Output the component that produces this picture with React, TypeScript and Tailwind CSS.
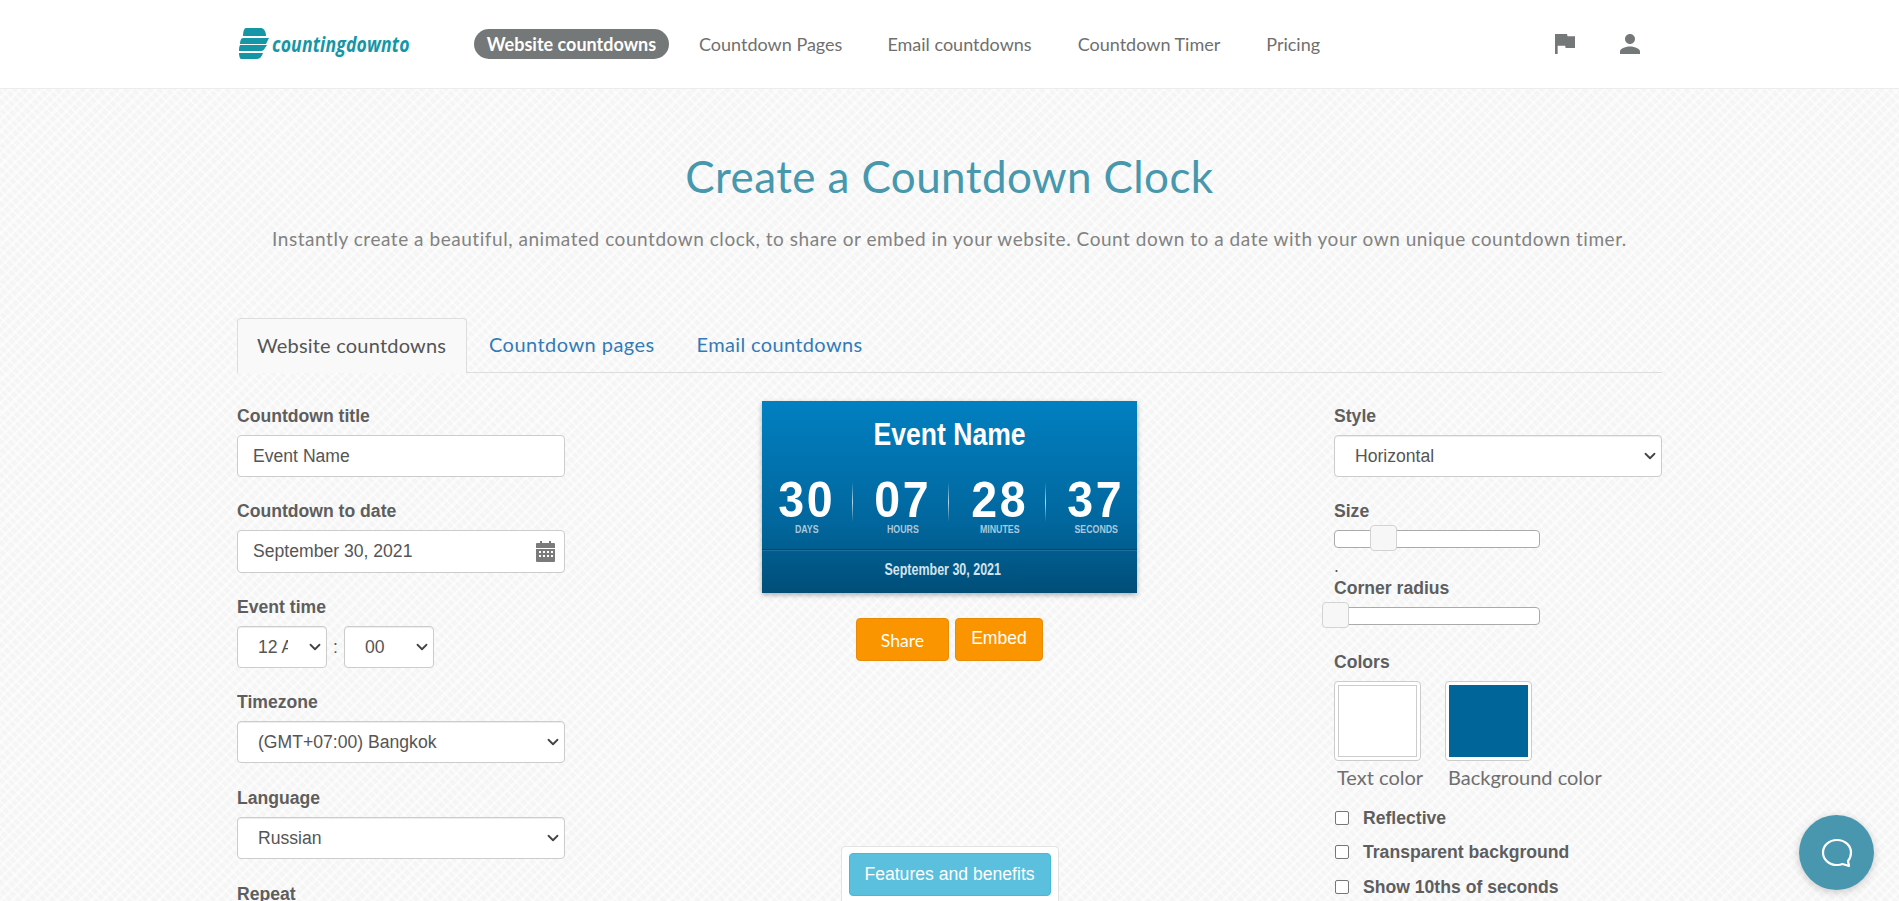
import { ChevronDown } from 'lucide-react'

const navItems = ['Countdown Pages', 'Email countdowns', 'Countdown Timer', 'Pricing']

function Label({ children }: { children: string }) {
  return <div className="text-[17.6px] leading-[20px] font-bold text-[#5e5e5e] mb-[9px]">{children}</div>
}

function SelectBox({ value, className, clip }: { value: string; className: string; clip?: boolean }) {
  return (
    <div className={`h-[42px] bg-white border border-[#ccc] rounded-[4px] flex items-center justify-between shadow-[inset_0_1px_1px_rgba(0,0,0,0.075)] ${className}`}>
      <span className={`text-[17.6px] text-[#555] ml-[20px] whitespace-nowrap ${clip ? 'w-[30px] overflow-hidden' : ''}`}>{value}</span>
      <ChevronDown size={18} strokeWidth={2.4} className="text-[#444] mr-[2px] shrink-0" />
    </div>
  )
}

function Slider({ thumb }: { thumb: string }) {
  return (
    <div className="relative w-[206px] h-[18px] bg-white border border-[#aaa] rounded-[4px]">
      <div className={`absolute top-[-6px] w-[27px] h-[26px] bg-[#f7f7f7] border border-[#d3d3d3] rounded-[4px] ${thumb}`} />
    </div>
  )
}

function Check({ label, className }: { label: string; className: string }) {
  return (
    <div className={`flex items-center h-[20px] ${className}`}>
      <div className="w-[14px] h-[14px] bg-white border border-[#767676] rounded-[2px] mr-[14px] ml-[1px]" />
      <span className="text-[17.6px] font-bold text-[#5e5e5e]">{label}</span>
    </div>
  )
}

function Unit({ num, unit }: { num: string; unit: string }) {
  return (
    <div className="w-[95.5px] flex flex-col items-center">
      <div className="text-[50px] leading-[44px] font-bold text-white tracking-[3px] scale-x-[0.93]">{num}</div>
      <div className="text-[11px] leading-[12px] mt-[1px] font-bold text-[#a9c8dc] scale-x-[0.8]">{unit}</div>
    </div>
  )
}

function Divider() {
  return <div className="w-px h-[40px] mt-[4px] -translate-x-[3px] bg-linear-to-b from-transparent via-[#b5d6ea] to-transparent" />
}

export default function App() {
  return (
    <div className="h-screen overflow-hidden font-['Liberation_Sans',Arial,sans-serif] relative bg-[#f5f5f5] bg-[repeating-linear-gradient(45deg,#ffffff00_0,#ffffff00_4px,#ffffff80_4px,#ffffff80_6px),repeating-linear-gradient(-45deg,#ffffff00_0,#ffffff00_5px,#ffffff80_5px,#ffffff80_8px)]">
      <header className="h-[89px] bg-white border-b border-[#ececec] pl-[238px] pr-[259px] flex items-center">
        <div className="flex items-center w-[236px] -mt-[2px]">
          <svg width="30" height="31" viewBox="0 0 30 31" fill="#1496a6" className="ml-px shrink-0">
            <path d="M7 0h15c3 0 5 4 5 8H4c0-4 1-8 3-8z" />
            <path d="M4 10h26l-3 6H1c0-3 1-6 3-6z" />
            <path d="M1 17h27l-2 3c-1 2-2 3-4 3H0c0-2 0-4 1-6z" />
            <path d="M0 25h24c-1 3-3 6-6 6H2c-1 0-2-3-2-6z" />
          </svg>
          <span className="font-['Open_Sans',sans-serif] italic font-bold text-[22px] leading-[30px] tracking-[0.2px] text-[#1496a6] ml-[3px] scale-x-[0.8] origin-left whitespace-nowrap">countingdownto</span>
        </div>
        <nav className="flex items-center font-['Lato',sans-serif] text-[18px] text-[#6f6f6f]">
          <span className="w-[195px] h-[30px] leading-[30px] text-center rounded-full bg-[#757878] text-white font-bold mr-[30px] -mt-[1px] whitespace-nowrap">Website countdowns</span>
          <span className="mr-[45px] whitespace-nowrap">{navItems[0]}</span>
          <span className="mr-[46px] whitespace-nowrap">{navItems[1]}</span>
          <span className="mr-[46px] whitespace-nowrap">{navItems[2]}</span>
          <span className="whitespace-nowrap">{navItems[3]}</span>
        </nav>
        <div className="ml-auto flex items-center gap-[45px] text-[#757878] -mt-[1px]">
          <svg width="20" height="20" viewBox="5 4 15 17" preserveAspectRatio="none" fill="currentColor"><path d="M14.4 6L14 4H5v17h2v-7h5.600l.4 2h7V6z" /></svg>
          <svg width="20" height="20" viewBox="4 4 16 16" fill="currentColor"><path d="M12 12c2.210 0 4-1.790 4-4s-1.790-4-4-4-4 1.790-4 4 1.790 4 4 4zm0 2c-2.670 0-8 1.340-8 4v2h16v-2c0-2.660-5.330-4-8-4z" /></svg>
        </div>
      </header>

      <h1 className="font-['Lato',sans-serif] text-[44px] leading-[50px] text-center text-[#4797ad] mt-[62px] tracking-[0.4px]">Create a Countdown Clock</h1>
      <p className="font-['Lato',sans-serif] text-[19px] leading-[26px] text-center text-[#828282] mt-[25px] tracking-[0.54px]">
        Instantly create a beautiful, animated countdown clock, to share or embed in your website. Count down to a date with your own unique countdown timer.
      </p>

      <div className="mx-[237px] mt-[66px]">
        <div className="flex items-end border-b border-[#ddd] h-[55px] font-['Lato',sans-serif] text-[20px] tracking-[0.2px]">
          <div className="h-[55px] -mb-[1px] pl-[19px] leading-[53px] border border-b-0 border-[#ddd] rounded-t-[4px] bg-[#f9f9f9] text-[#555] w-[230px] whitespace-nowrap">Website countdowns</div>
          <div className="h-[54px] leading-[52px] pl-[22px] pr-[21px] text-[#337ab7] tracking-[0.45px]">Countdown pages</div>
          <div className="h-[54px] leading-[52px] pl-[21px] text-[#337ab7] tracking-[0.35px]">Email countdowns</div>
        </div>

        <div className="grid grid-cols-[328px_1fr_328px] mt-[33px]">
          <div>
            <Label>Countdown title</Label>
            <div className="h-[42px] bg-white border border-[#ccc] rounded-[4px] pl-[15px] flex items-center text-[17.6px] text-[#555]">Event Name</div>
            <div className="mt-[24px]"><Label>Countdown to date</Label></div>
            <div className="h-[43px] bg-white border border-[#ccc] rounded-[4px] pl-[15px] pr-[9px] flex items-center justify-between text-[17.6px] text-[#555]">
              September 30, 2021
              <svg width="19" height="21" viewBox="0 0 19 21" fill="#7b7b7b">
                <path d="M4 0h2v2h7V0h2v2h3a1 1 0 0 1 1 1v4H0V3a1 1 0 0 1 1-1h3z" />
                <path fillRule="evenodd" d="M0 8h19v12a1 1 0 0 1-1 1H1a1 1 0 0 1-1-1zM3 10v2h2v-2zm4 0v2h2v-2zm4 0v2h2v-2zm4 0v2h2v-2zM3 14v2h2v-2zm4 0v2h2v-2zm4 0v2h2v-2zm4 0v2h2v-2z" />
              </svg>
            </div>
            <div className="mt-[24px]"><Label>Event time</Label></div>
            <div className="flex items-center">
              <SelectBox value="12 AM" clip className="w-[90px]" />
              <span className="w-[17px] text-center text-[17.6px] text-[#555]">:</span>
              <SelectBox value="00" className="w-[90px]" />
            </div>
            <div className="mt-[24px]"><Label>Timezone</Label></div>
            <SelectBox value="(GMT+07:00) Bangkok" className="w-[328px]" />
            <div className="mt-[25px]"><Label>Language</Label></div>
            <SelectBox value="Russian" className="w-[328px]" />
            <div className="mt-[25px]"><Label>Repeat</Label></div>
          </div>

          <div className="flex flex-col items-center">
            <div className="w-[375px] h-[192px] -mt-[5px] bg-linear-to-b from-[#0180c1] via-[#01669c] via-[65%] to-[#004e78] shadow-[0_2px_5px_rgba(0,0,0,0.3)] flex flex-col items-center">
              <div className="text-[32px] leading-[36px] font-bold text-white mt-[15px] scale-x-[0.83] whitespace-nowrap">Event Name</div>
              <div className="flex items-start mt-[26px] translate-x-[2px]">
                <Unit num="30" unit="DAYS" />
                <Divider />
                <Unit num="07" unit="HOURS" />
                <Divider />
                <Unit num="28" unit="MINUTES" />
                <Divider />
                <Unit num="37" unit="SECONDS" />
              </div>
              <div className="w-full border-t border-[#01456b] mt-[14px] shadow-[0_1px_0_rgba(255,255,255,0.12)]" />
              <div className="text-[16px] leading-[20px] font-bold text-[#d4e4ee] mt-[10px] -ml-[14px] scale-x-[0.78] whitespace-nowrap">September 30, 2021</div>
            </div>
            <div className="flex gap-[6px] mt-[25px]">
              <div className="w-[93px] h-[43px] rounded-[4px] bg-[#fa9500] border border-[#e98c05] text-white text-[17.6px] font-['Lato',sans-serif] flex items-center justify-center pt-[3px]">Share</div>
              <div className="w-[88px] h-[43px] rounded-[4px] bg-[#fa9500] border border-[#e98c05] text-white text-[17.6px] flex items-center justify-center pb-[2px]">Embed</div>
            </div>
            <div className="mt-[185px] w-[218px] bg-white border border-[#e3e3e3] rounded-[4px] px-[7px] pt-[6px] pb-[40px]">
              <div className="h-[43px] rounded-[4px] bg-[#5bc0de] border border-[#46b8da] text-white text-[17.6px] flex items-center justify-center whitespace-nowrap">Features and benefits</div>
            </div>
          </div>

          <div>
            <Label>Style</Label>
            <SelectBox value="Horizontal" className="w-[328px]" />
            <div className="mt-[24px]"><Label>Size</Label></div>
            <Slider thumb="left-[35px]" />
            <div className="text-[17.6px] leading-[18px] text-[#555] mt-[9px] mb-[3px]">.</div>
            <Label>Corner radius</Label>
            <Slider thumb="-left-[13px]" />
            <div className="mt-[27px]"><Label>Colors</Label></div>
            <div className="flex gap-[24px]">
              <div className="w-[87px] h-[80px] bg-white border border-[#ccc] rounded-[4px] p-[3px]"><div className="h-full border border-[#ccc]" /></div>
              <div className="w-[87px] h-[80px] bg-white border border-[#ccc] rounded-[4px] p-[3px]"><div className="h-full bg-[#006699]" /></div>
            </div>
            <div className="flex font-['Lato',sans-serif] text-[20px] leading-[24px] text-[#6f6f6f] mt-[4px] pl-[3px] whitespace-nowrap">
              <span className="w-[111px]">Text color</span>
              <span>Background color</span>
            </div>
            <Check label="Reflective" className="mt-[19px]" />
            <Check label="Transparent background" className="mt-[14px]" />
            <Check label="Show 10ths of seconds" className="mt-[15px]" />
          </div>
        </div>
      </div>

      <div className="fixed right-[25px] bottom-[11px] w-[75px] h-[75px] rounded-full bg-[#4897af] flex items-center justify-center shadow-[0_2px_8px_rgba(0,0,0,0.2)]">
        <svg width="32" height="30" viewBox="0 0 32 30" fill="none" stroke="white" strokeWidth="2.200">
          <path d="M16 2C8 2 2 7.500 2 14.500S8 27 16 27c2 0 4-.3 5.500-1l6.500 2-1-5c2-2.500 3-5 3-8.500C30 7.500 24 2 16 2z" strokeLinejoin="round" />
        </svg>
      </div>
    </div>
  )
}
